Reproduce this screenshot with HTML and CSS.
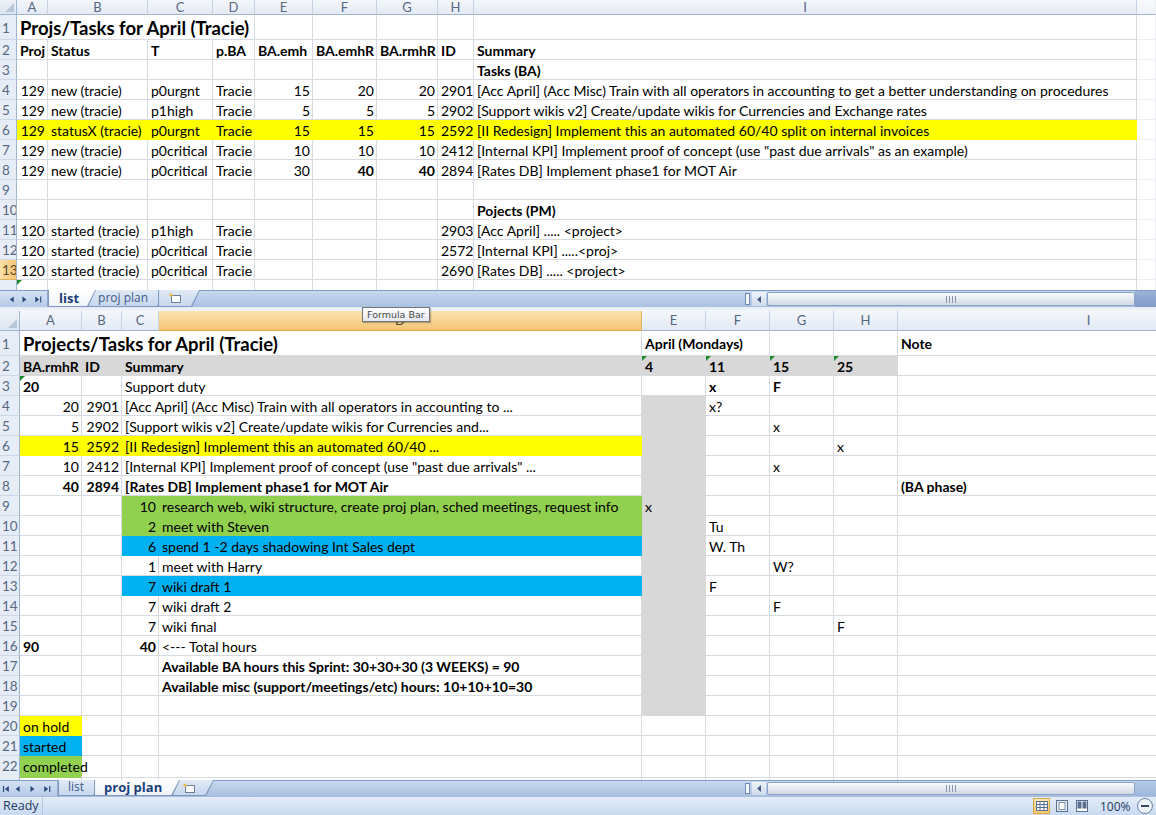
FILE: index.html
```html
<!DOCTYPE html>
<html>
<head>
<meta charset="utf-8">
<title>Projs/Tasks for April (Tracie)</title>
<link rel="stylesheet" href="styles.css">
</head>
<body>
<div class="app">

<section class="pane top">
  <div class="r hdr"><div class="corner"></div><div>A</div><div>B</div><div>C</div><div>D</div><div>E</div><div>F</div><div>G</div><div>H</div><div>I</div><div class="fade"></div></div>
  <div class="r r1"><div class="h">1</div><div class="s4 title">Projs/Tasks for April (Tracie)</div><div></div><div></div><div></div><div></div><div></div><div class="fade"></div></div>
  <div class="r b"><div class="h">2</div><div>Proj</div><div>Status</div><div>T</div><div>p.BA</div><div>BA.emh</div><div>BA.emhR</div><div>BA.rmhR</div><div>ID</div><div>Summary</div><div class="fade"></div></div>
  <div class="r"><div class="h">3</div><div></div><div></div><div></div><div></div><div></div><div></div><div></div><div></div><div class="bb">Tasks (BA)</div><div class="fade"></div></div>
  <div class="r"><div class="h">4</div><div class="n">129</div><div>new (tracie)</div><div>p0urgnt</div><div>Tracie</div><div class="n">15</div><div class="n">20</div><div class="n">20</div><div class="n">2901</div><div>[Acc April] (Acc Misc) Train with all operators in accounting to get a better understanding on procedures</div><div class="fade"></div></div>
  <div class="r"><div class="h">5</div><div class="n">129</div><div>new (tracie)</div><div>p1high</div><div>Tracie</div><div class="n">5</div><div class="n">5</div><div class="n">5</div><div class="n">2902</div><div>[Support wikis v2] Create/update wikis for Currencies and Exchange rates</div><div class="fade"></div></div>
  <div class="r"><div class="h">6</div><div class="n y">129</div><div class="y">statusX (tracie)</div><div class="y">p0urgnt</div><div class="y">Tracie</div><div class="n y">15</div><div class="n y">15</div><div class="n y">15</div><div class="n y">2592</div><div class="y">[II Redesign] Implement this an automated 60/40 split on internal invoices</div><div class="fade"></div></div>
  <div class="r"><div class="h">7</div><div class="n">129</div><div>new (tracie)</div><div>p0critical</div><div>Tracie</div><div class="n">10</div><div class="n">10</div><div class="n">10</div><div class="n">2412</div><div>[Internal KPI] Implement proof of concept (use "past due arrivals" as an example)</div><div class="fade"></div></div>
  <div class="r"><div class="h">8</div><div class="n">129</div><div>new (tracie)</div><div>p0critical</div><div>Tracie</div><div class="n">30</div><div class="n bb">40</div><div class="n bb">40</div><div class="n">2894</div><div>[Rates DB] Implement phase1 for MOT Air</div><div class="fade"></div></div>
  <div class="r"><div class="h">9</div><div></div><div></div><div></div><div></div><div></div><div></div><div></div><div></div><div></div><div class="fade"></div></div>
  <div class="r"><div class="h">10</div><div></div><div></div><div></div><div></div><div></div><div></div><div></div><div></div><div class="bb">Pojects (PM)</div><div class="fade"></div></div>
  <div class="r"><div class="h">11</div><div class="n">120</div><div>started (tracie)</div><div>p1high</div><div>Tracie</div><div></div><div></div><div></div><div class="n">2903</div><div>[Acc April] ..... &lt;project&gt;</div><div class="fade"></div></div>
  <div class="r"><div class="h">12</div><div class="n">120</div><div>started (tracie)</div><div>p0critical</div><div>Tracie</div><div></div><div></div><div></div><div class="n">2572</div><div>[Internal KPI] .....&lt;proj&gt;</div><div class="fade"></div></div>
  <div class="r"><div class="h sel">13</div><div class="n">120</div><div>started (tracie)</div><div>p0critical</div><div>Tracie</div><div></div><div></div><div></div><div class="n">2690</div><div>[Rates DB] ..... &lt;project&gt;</div><div class="fade"></div></div>
  <div class="r part"><div class="h"></div><div class="t"></div><div></div><div></div><div></div><div></div><div></div><div></div><div></div><div></div><div class="fade"></div></div>
</section>

<div class="tabbar tb-top">
  <div class="nav">
    <svg width="48" height="17" viewBox="0 0 48 17"><path d="M14 5.5v6l-4-3z" fill="#2c4a7c"/><path d="M23 5.5v6l4-3z" fill="#2c4a7c"/><path d="M36 5.5v6l4-3z M41 5.5h1.2v6H41z" fill="#2c4a7c"/></svg>
  </div>
  <div class="tabs">
    <div class="tab act"><span>list</span></div>
    <div class="tab"><span>proj plan</span></div>
    <div class="tab newt"><span><svg width="16" height="12" viewBox="0 0 16 12"><rect x="4.5" y="3.5" width="9" height="7" fill="#fbfcfe" stroke="#6f7f96"/><path d="M4 1l.8 1.8L6.7 3l-1.9.7L4 5.5l-.8-1.8L1.3 3l1.9-.7z" fill="#f2b630"/></svg></span></div>
  </div>
  <div class="fill"></div>
  <div class="hscroll">
    <div class="split"></div>
    <div class="arrow"><svg width="8" height="9" viewBox="0 0 8 9"><path d="M6 1v7L2 4.5z" fill="#4a5f80"/></svg></div>
    <div class="thumb"><span class="grip"></span></div>
  </div>
  <div class="cornerbox"></div>
</div>

<div class="gap"></div>

<section class="pane bottom">
  <div class="r hdr"><div class="corner"></div><div>A</div><div>B</div><div>C</div><div class="selc">D</div><div>E</div><div>F</div><div>G</div><div>H</div><div>I</div></div>
  <div class="r r1"><div class="h">1</div><div class="s4 title">Projects/Tasks for April (Tracie)</div><div class="s2 bb">April (Mondays)</div><div></div><div></div><div class="bb">Note</div></div>
  <div class="r"><div class="h">2</div><div class="gr bb">BA.rmhR</div><div class="gr bb">ID</div><div class="gr bb s2">Summary</div><div class="gr bb t">4</div><div class="gr bb t">11</div><div class="gr bb t">15</div><div class="gr bb t">25</div><div></div></div>
  <div class="r"><div class="h">3</div><div class="bb t">20</div><div></div><div class="s2">Support duty</div><div></div><div class="bb">x</div><div class="bb">F</div><div></div><div></div></div>
  <div class="r"><div class="h">4</div><div class="n">20</div><div class="n">2901</div><div class="s2">[Acc April] (Acc Misc) Train with all operators in accounting to ...</div><div class="gr"></div><div>x?</div><div></div><div></div><div></div></div>
  <div class="r"><div class="h">5</div><div class="n">5</div><div class="n">2902</div><div class="s2">[Support wikis v2] Create/update wikis for Currencies and...</div><div class="gr"></div><div></div><div>x</div><div></div><div></div></div>
  <div class="r"><div class="h">6</div><div class="n y">15</div><div class="n y">2592</div><div class="s2 y">[II Redesign] Implement this an automated 60/40 ...</div><div class="gr"></div><div></div><div></div><div>x</div><div></div></div>
  <div class="r"><div class="h">7</div><div class="n">10</div><div class="n">2412</div><div class="s2">[Internal KPI] Implement proof of concept (use "past due arrivals" ...</div><div class="gr"></div><div></div><div>x</div><div></div><div></div></div>
  <div class="r"><div class="h">8</div><div class="n bb">40</div><div class="n bb">2894</div><div class="s2 bb">[Rates DB] Implement phase1 for MOT Air</div><div class="gr"></div><div></div><div></div><div></div><div class="bb">(BA phase)</div></div>
  <div class="r"><div class="h">9</div><div></div><div></div><div class="n g">10</div><div class="g">research web, wiki structure, create proj plan, sched meetings, request info</div><div class="gr">x</div><div></div><div></div><div></div><div></div></div>
  <div class="r"><div class="h">10</div><div></div><div></div><div class="n g">2</div><div class="g">meet with Steven</div><div class="gr"></div><div>Tu</div><div></div><div></div><div></div></div>
  <div class="r"><div class="h">11</div><div></div><div></div><div class="n bl">6</div><div class="bl">spend 1 -2 days shadowing Int Sales dept</div><div class="gr"></div><div>W. Th</div><div></div><div></div><div></div></div>
  <div class="r"><div class="h">12</div><div></div><div></div><div class="n">1</div><div>meet with Harry</div><div class="gr"></div><div></div><div>W?</div><div></div><div></div></div>
  <div class="r"><div class="h">13</div><div></div><div></div><div class="n bl">7</div><div class="bl">wiki draft 1</div><div class="gr"></div><div>F</div><div></div><div></div><div></div></div>
  <div class="r"><div class="h">14</div><div></div><div></div><div class="n">7</div><div>wiki draft 2</div><div class="gr"></div><div></div><div>F</div><div></div><div></div></div>
  <div class="r"><div class="h">15</div><div></div><div></div><div class="n">7</div><div>wiki final</div><div class="gr"></div><div></div><div></div><div>F</div><div></div></div>
  <div class="r"><div class="h">16</div><div class="bb">90</div><div></div><div class="n bb">40</div><div>&lt;--- Total hours</div><div class="gr"></div><div></div><div></div><div></div><div></div></div>
  <div class="r"><div class="h">17</div><div></div><div></div><div></div><div class="bb">Available BA hours this Sprint: 30+30+30 (3 WEEKS) = 90</div><div class="gr"></div><div></div><div></div><div></div><div></div></div>
  <div class="r"><div class="h">18</div><div></div><div></div><div></div><div class="bb">Available misc (support/meetings/etc) hours: 10+10+10=30</div><div class="gr"></div><div></div><div></div><div></div><div></div></div>
  <div class="r"><div class="h">19</div><div></div><div></div><div></div><div></div><div class="gr"></div><div></div><div></div><div></div><div></div></div>
  <div class="r"><div class="h">20</div><div class="y">on hold</div><div></div><div></div><div></div><div></div><div></div><div></div><div></div><div></div></div>
  <div class="r"><div class="h">21</div><div class="bl">started</div><div></div><div></div><div></div><div></div><div></div><div></div><div></div><div></div></div>
  <div class="r"><div class="h">22</div><div class="g ov">completed</div><div></div><div></div><div></div><div></div><div></div><div></div><div></div><div></div></div>
  <div class="r part"><div class="h"></div><div></div><div></div><div></div><div></div><div></div><div></div><div></div><div></div><div></div></div>
</section>

<div class="tabbar tb-bot">
  <div class="nav">
    <svg width="58" height="16" viewBox="0 0 58 16"><path d="M3 5h1.2v6H3z M9 5v6l-4-3z" fill="#2c4a7c"/><path d="M20 5v6l-4-3z" fill="#2c4a7c"/><path d="M31 5v6l4-3z" fill="#2c4a7c"/><path d="M45 5v6l4-3z M50 5h1.2v6H50z" fill="#2c4a7c"/></svg>
  </div>
  <div class="tabs">
    <div class="tab"><span>list</span></div>
    <div class="tab act"><span>proj plan</span></div>
    <div class="tab newt"><span><svg width="16" height="12" viewBox="0 0 16 12"><rect x="4.5" y="3.5" width="9" height="7" fill="#fbfcfe" stroke="#6f7f96"/><path d="M4 1l.8 1.8L6.7 3l-1.9.7L4 5.5l-.8-1.8L1.3 3l1.9-.7z" fill="#f2b630"/></svg></span></div>
  </div>
  <div class="fill"></div>
  <div class="hscroll">
    <div class="split"></div>
    <div class="arrow"><svg width="8" height="9" viewBox="0 0 8 9"><path d="M6 1v7L2 4.5z" fill="#4a5f80"/></svg></div>
    <div class="thumb"><span class="grip"></span></div>
  </div>
  <div class="cornerbox"></div>
</div>

<div class="status">
  <div class="ready">Ready</div>
  <div class="fill"></div>
  <div class="views">
    <span class="vb on"><svg width="14" height="12" viewBox="0 0 14 12"><rect x="1.5" y="1.5" width="11" height="9" fill="#fff" stroke="#58708f"/><path d="M1.5 4.5h11M1.5 7.5h11M5 1.5v9M9 1.5v9" stroke="#58708f" fill="none"/></svg></span>
    <span class="vb"><svg width="14" height="12" viewBox="0 0 14 12"><rect x="1.5" y="0.5" width="11" height="11" fill="#e9eef5" stroke="#58708f"/><rect x="4" y="2.5" width="6" height="7" fill="#fff" stroke="#7a8ca6"/></svg></span>
    <span class="vb"><svg width="14" height="12" viewBox="0 0 14 12"><rect x="1.5" y="0.5" width="11" height="11" fill="#fff" stroke="#58708f"/><rect x="2.5" y="1.5" width="4" height="7" fill="#5a6f8f"/><rect x="7.5" y="1.5" width="4" height="7" fill="#5a6f8f"/></svg></span>
  </div>
  <div class="zoompct">100%</div>
  <div class="zoomout"><svg width="18" height="18" viewBox="0 0 18 18"><circle cx="9" cy="9" r="7.5" fill="#eef3fa" stroke="#6d84a6"/><path d="M5 9h8" stroke="#33486a" stroke-width="2"/></svg></div>
</div>

<div class="tip">Formula Bar</div>

</div>
</body>
</html>
```

FILE: styles.css
```css
* { box-sizing: border-box; }
html, body { margin: 0; padding: 0; }
body {
  width: 1156px;
  height: 815px;
  overflow: hidden;
  background: #fff;
  color: #000;
  font-family: Lato, "Liberation Sans", sans-serif;
  font-size: 14px;
}
.app {
  position: relative;
  display: flex;
  flex-direction: column;
  height: 815px;
}

/* ---------- panes / grid ---------- */
.pane { flex: none; overflow: hidden; background: #fff; }
.top { height: 290px; }
.bottom { height: 469px; }

.r { display: grid; height: 20px; }
.top .r { grid-template-columns: 17px 31px 100px 65px 42px 58px 64px 61px 36px 663px 19px; }
.bottom .r { grid-template-columns: 20px 62px 40px 37px 483px 64px 64px 64px 64px 382px; }

.r > div {
  position: relative;
  border-right: 1px solid #d7dbe1;
  border-bottom: 1px solid #d7dbe1;
  padding: 0 2px 0 3px;
  white-space: nowrap;
  overflow: hidden;
  line-height: 21px;
}
.r > div.ov { overflow: visible; }
.r.r1 { height: 25px; }
.r.r1 > div { line-height: 26px; }
.title { font-size: 18.5px; font-weight: 700; }

.s2 { grid-column: span 2; }
.s4 { grid-column: span 4; }
.n { text-align: right; }
.bb, .r.b > div:not(.h) { font-weight: 700; }

/* fills */
.r > .y { background: #ffff00; border-color: #ffff00; }
.r > .g { background: #92d050; border-color: #92d050; }
.r > .bl { background: #00b0f0; border-color: #00b0f0; }
.r > .gr { background: #d8d8d8; border-color: #d8d8d8; }
.r > .fade { border-right-color: #eceef1; border-bottom-color: #eceef1; }

/* error indicator triangle */
.t::before {
  content: "";
  position: absolute;
  left: 0;
  top: 0;
  border-top: 5px solid #1d8a2a;
  border-right: 5px solid transparent;
}

/* column headers */
.r.hdr { height: 15px; }
.bottom .r.hdr { height: 20px; }
.r.hdr > div {
  background: linear-gradient(#f4f7fb, #e3eaf4);
  border-right: 1px solid #c6d3e4;
  border-bottom: 1px solid #9fb5d2;
  text-align: center;
  color: #566883;
  font-size: 13px;
  line-height: 14px;
  padding: 0;
}
.bottom .r.hdr > div { line-height: 19px; }
.r.hdr > .selc { background: linear-gradient(#fbe2ae, #f4c677); border-right-color: #e0b260; border-bottom-color: #d9a94d; color: #5a4a2a; }
.r.hdr > .fade { background: linear-gradient(#f8fafc, #eef2f8); border-right-color: #eceef1; }
.r.hdr > .corner {
  background: linear-gradient(#eef2f8, #dde5f0);
  border-right-color: #9fb5d2;
}
.r.hdr > .corner::after {
  content: "";
  position: absolute;
  right: 2px;
  bottom: 2px;
  border-bottom: 9px solid #b9c7da;
  border-left: 9px solid transparent;
}

/* row headers */
.r > .h {
  background: #e7edf6;
  border-right: 1px solid #9fb5d2;
  border-bottom: 1px solid #cbd8e9;
  color: #566883;
  font-size: 13.5px;
  padding: 0 0 0 2px;
  text-align: left;
}
.r > .h.sel { background: linear-gradient(90deg, #fbe0a6, #f4c677); color: #5a4a2a; border-bottom-color: #e0b260; }

/* ---------- tab bars ---------- */
.tabbar {
  flex: none;
  display: flex;
  align-items: stretch;
  background: linear-gradient(#c8d9ef, #a9c1e1);
  border-top: 1px solid #7f9cc9;
  font-family: "Open Sans", "DejaVu Sans", sans-serif;
}
.tb-top { height: 17px; }
.tb-bot { height: 16px; }
.nav { flex: none; display: flex; align-items: center; border-right: 1px solid #8fa9cf; background: linear-gradient(#d4e2f4, #b7cbe7); }
.tb-top .nav { width: 48px; }
.tb-bot .nav { width: 58px; }
.nav svg { display: block; }

.tabs { flex: none; display: flex; align-items: stretch; }
.tab {
  position: relative;
  margin-top: -1px;
  margin-right: -8px;
  padding: 0 1px 1px 1px;
  background: #7f98bf;
  clip-path: polygon(0 0, 100% 0, calc(100% - 8px) 100%, 0 100%);
}
.tab > span {
  display: flex;
  align-items: center;
  height: 100%;
  padding: 0 17px 1px 9px;
  background: linear-gradient(#e1eaf6, #c6d7ee);
  clip-path: polygon(0 0, 100% 0, calc(100% - 8px) 100%, 0 100%);
  color: #3b5a89;
  font-size: 12px;
  line-height: 14px;
}
.tab.act { z-index: 2; }
.tab.act > span { background: linear-gradient(#ffffff, #eef3fa); color: #1b3f7a; font-weight: 700; font-size: 13px; }
.tab.newt > span { padding: 0 16px 0 8px; }
.tb-top .tab:first-child > span { padding-left: 10px; padding-right: 16px; }

.fill { flex: 1; }

.hscroll {
  flex: none;
  width: 390px;
  display: flex;
  align-items: stretch;
  padding: 1px 0;
}
.split { width: 5px; margin: 1px 2px 1px 0; background: #f4f7fb; border: 1px solid #6f89b0; }
.arrow { width: 14px; display: flex; align-items: center; justify-content: center; background: linear-gradient(#eef3f9, #cfdbeb); }
.thumb {
  flex: 1;
  display: flex;
  align-items: center;
  justify-content: center;
  margin-left: 1px;
  border: 1px solid #8aa3c7;
  border-radius: 2px;
  background: linear-gradient(#f8fafd, #e6ebf2 50%, #d0d8e4);
}
.grip { width: 11px; height: 7px; background: repeating-linear-gradient(90deg, #8897ad 0 1px, transparent 1px 3px); }
.cornerbox { flex: none; width: 21px; background: linear-gradient(#9ab3d8, #7f9cc8); }
.tb-bot .cornerbox { background: linear-gradient(#b7cbe8, #9db6dc); }

.gap { flex: none; height: 4px; background: linear-gradient(#e4ebf5, #f2f5fa); }

/* ---------- status bar ---------- */
.status {
  flex: none;
  height: 19px;
  display: flex;
  align-items: center;
  background: linear-gradient(#e3ecf8, #c9daf0);
  border-top: 1px solid #a9bedd;
  color: #1e3a62;
  font-family: "Open Sans", "DejaVu Sans", sans-serif;
  font-size: 12.5px;
}
.ready { width: 43px; padding-left: 3px; height: 100%; line-height: 18px; border-right: 1px solid #b3c6e0; }
.views { display: flex; gap: 3px; margin-right: 10px; }
.vb { width: 17px; height: 16px; display: flex; align-items: center; justify-content: center; }
.vb.on { background: linear-gradient(#fde9b5, #f7c86a); border: 1px solid #d9a848; }
.zoompct { width: 36px; font-size: 12px; }
.zoomout { width: 20px; display: flex; align-items: center; }

/* tooltip */
.tip {
  position: absolute;
  left: 362px;
  top: 307px;
  width: 68px;
  height: 15px;
  background: linear-gradient(#ffffff, #e4e8ef);
  border: 1px solid #767676;
  box-shadow: 1px 1px 1px rgba(0,0,0,.25);
  font-family: "DejaVu Sans", sans-serif;
  font-size: 9.5px;
  line-height: 13px;
  color: #4c4c4c;
  padding-left: 4px;
  z-index: 5;
}
```
